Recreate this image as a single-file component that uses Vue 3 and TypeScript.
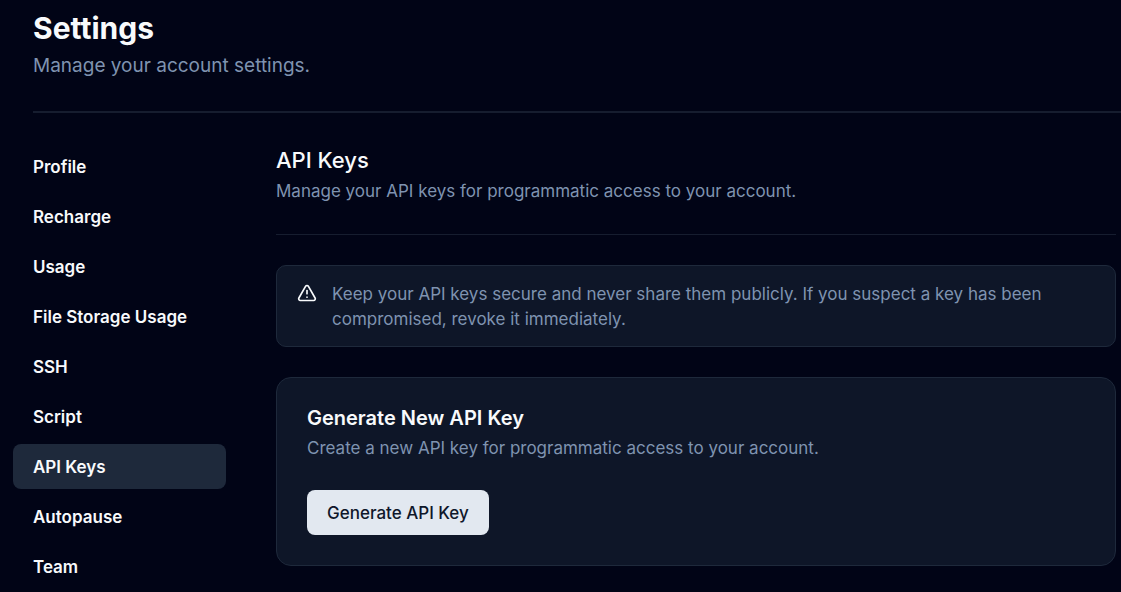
<script setup lang="ts">
import { ref } from 'vue'

const sections: string[] = ['Profile', 'Recharge', 'Usage', 'File Storage Usage', 'SSH', 'Script', 'API Keys', 'Autopause', 'Team']
const active = ref<string>('API Keys')
</script>

<template>
  <div class="page">
    <header class="page-header">
      <h1>Settings</h1>
      <p>Manage your account settings.</p>
    </header>
    <div class="layout">
      <nav class="sidebar" aria-label="Settings">
        <a v-for="s in sections" :key="s" href="#" :class="{ active: s === active }" @click.prevent="active = s">{{ s }}</a>
      </nav>
      <main class="content">
        <div class="intro">
          <h2>API Keys</h2>
          <p>Manage your API keys for programmatic access to your account.</p>
        </div>
        <div class="alert" role="alert">
          <svg viewBox="0 0 24 24" fill="none" stroke="currentColor" stroke-width="2" stroke-linecap="round" stroke-linejoin="round" aria-hidden="true">
            <path d="m21.73 18-8-14a2 2 0 0 0-3.48 0l-8 14A2 2 0 0 0 4 21h16a2 2 0 0 0 1.73-3Z" />
            <path d="M12 9v4" />
            <path d="M12 17h.01" />
          </svg>
          <p>Keep your API keys secure and never share them publicly. If you suspect a key has been compromised, revoke it immediately.</p>
        </div>
        <section class="card">
          <h3>Generate New API Key</h3>
          <p>Create a new API key for programmatic access to your account.</p>
          <button type="button">Generate API Key</button>
        </section>
      </main>
    </div>
  </div>
</template>

<style>
body {
  background: #020617;
}
</style>

<style scoped>
* {
  box-sizing: border-box;
  margin: 0;
}
.page {
  height: 100vh;
  overflow: hidden;
  background: #010416;
  color: #f8fafc;
  font-family: Inter, "Liberation Sans", sans-serif;
  font-size: 17px;
  line-height: 25px;
}
.page-header {
  margin-left: 33px;
  padding: 8px 0 29px;
  border-bottom: 2px solid #161d2f;
}
h1 {
  margin-bottom: 2px;
  font-size: 30px;
  line-height: 40px;
  font-weight: 700;
}
p {
  color: #7f93b0;
}
.page-header p {
  font-size: 19px;
  line-height: 32px;
}
.layout {
  display: flex;
  gap: 50px;
  padding: 31px 5px 0 13px;
}
.sidebar {
  display: flex;
  flex-direction: column;
  gap: 5px;
  width: 213px;
  flex: none;
}
.sidebar a {
  padding: 11px 20px 9px;
  border-radius: 8px;
  color: inherit;
  font-weight: 600;
  text-decoration: none;
}
.sidebar a.active {
  background: #1e293b;
}
.content {
  flex: 1;
  min-width: 0;
  padding-top: 2px;
}
.intro {
  padding-bottom: 30px;
  margin-bottom: 30px;
  border-bottom: 1px solid #161d2f;
}
h2 {
  font-size: 22px;
  line-height: 28px;
  font-weight: 500;
  margin-bottom: 5px;
}
.alert,
.card {
  background: #0e1628;
  border: 1px solid #1e293b;
}
.alert {
  display: flex;
  gap: 15px;
  padding: 16px 20px 14px;
  border-radius: 10px;
  margin-bottom: 30px;
}
.alert svg {
  width: 20px;
  height: 20px;
  flex: none;
  margin-top: 1px;
}
.card {
  padding: 25px 30px 30px;
  border-radius: 15px;
}
h3 {
  margin-bottom: 3px;
  font-size: 20px;
  line-height: 30px;
  font-weight: 600;
}
.card p {
  margin-bottom: 29px;
}
button {
  height: 45px;
  padding: 2px 20px 0;
  border: 0;
  border-radius: 8px;
  background: #e2e8f0;
  color: #0f172a;
  font: inherit;
  font-weight: 500;
}
</style>
